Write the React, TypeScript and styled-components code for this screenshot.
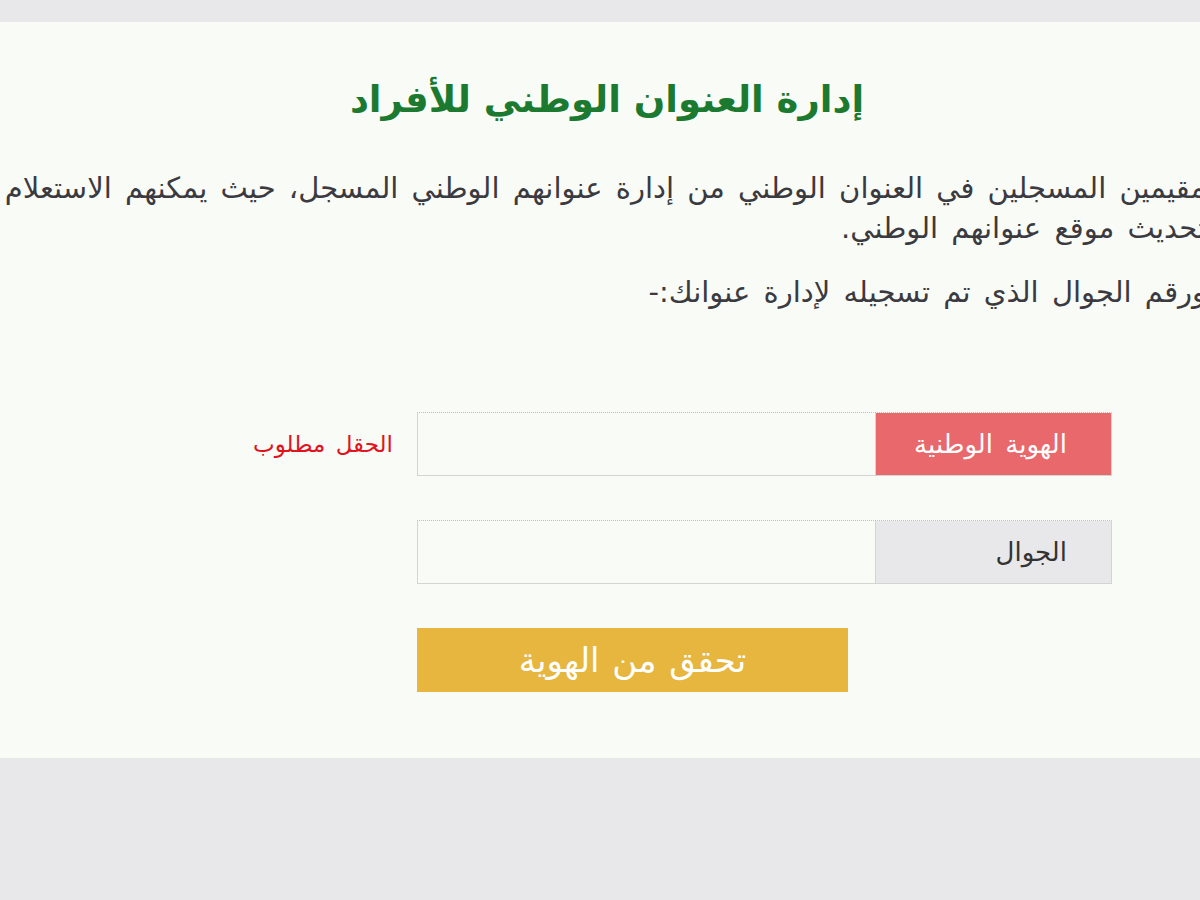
import React from "react";
import styled, { createGlobalStyle } from "styled-components";

const GlobalStyle = createGlobalStyle`
  html, body {
    margin: 0;
    padding: 0;
    background: #e8e8ea;
    overflow: hidden;
  }
  body {
    font-family: "DejaVu Sans", "Noto Sans", sans-serif;
  }
`;

const Page = styled.div`
  width: 1200px;
  height: 900px;
  padding-top: 22px;
  box-sizing: border-box;
  overflow: hidden;
`;

const Panel = styled.section`
  background: #f9fbf7;
  height: 736px;
  box-sizing: border-box;
  padding-top: 54px;
  overflow: hidden;
`;

const Title = styled.h1`
  margin: 0;
  padding-left: 14px;
  text-align: center;
  direction: rtl;
  font-family: "DejaVu Sans", sans-serif;
  font-size: 37px;
  font-weight: bold;
  line-height: 48px;
  color: #1b7a30;
`;

const Text = styled.p<{ $gap?: number }>`
  margin: ${(p) => p.$gap ?? 0}px -6px 0 0;
  direction: rtl;
  text-align: right;
  color: #3a3a40;
  font-size: 29px;
  word-spacing: 4px;
  line-height: 40px;
`;

const Line = styled.span`
  display: block;
  white-space: nowrap;
`;

const Form = styled.form`
  margin-top: 100px;
  padding-right: 88px;
  direction: rtl;
  display: flex;
  flex-direction: column;
  gap: 44px;
`;

const Row = styled.div`
  display: flex;
  align-items: center;
`;

const Group = styled.div`
  width: 695px;
  height: 64px;
  display: flex;
  box-sizing: border-box;
  border: 1px solid #d2d5d2;
  border-top-style: dotted;
  border-top-color: #c9b8c9;
`;

const Addon = styled.label<{ $error?: boolean }>`
  width: 236px;
  flex: none;
  display: flex;
  align-items: center;
  padding-right: 44px;
  box-sizing: border-box;
  background: ${(p) => (p.$error ? "#e9686b" : "#e8e8ea")};
  color: ${(p) => (p.$error ? "#ffffff" : "#333333")};
  font-size: 26px;
  word-spacing: 4px;
  border-left: 1px solid #d2d5d2;
`;

const Input = styled.input`
  flex: 1;
  border: none;
  background: #f9fbf7;
  outline: none;
  font-size: 18px;
  font-family: inherit;
`;

const Error = styled.span`
  margin-right: 24px;
  color: #e0141e;
  font-size: 23px;
  word-spacing: 3px;
  white-space: nowrap;
`;

const ButtonRow = styled.div`
  width: 695px;
  display: flex;
  justify-content: flex-end;
`;

const Button = styled.button`
  width: 431px;
  height: 64px;
  border: none;
  background: #e6b63e;
  color: #ffffff;
  font-family: inherit;
  font-size: 34px;
  word-spacing: 2px;
  cursor: pointer;
`;

export default function App() {
  return (
    <>
      <GlobalStyle />
      <Page>
        <Panel>
          <Title>إدارة العنوان الوطني للأفراد</Title>
          <Text $gap={44}>
            <Line>
              مقيمين المسجلين في العنوان الوطني من إدارة عنوانهم الوطني المسجل، حيث يمكنهم الاستعلام عن العنوان الوطني و
            </Line>
            <Line>تحديث موقع عنوانهم الوطني.</Line>
          </Text>
          <Text $gap={24}>
            <Line>ورقم الجوال الذي تم تسجيله لإدارة عنوانك:-</Line>
          </Text>
          <Form onSubmit={(e) => e.preventDefault()}>
            <Row>
              <Group>
                <Addon $error>الهوية الوطنية</Addon>
                <Input type="text" />
              </Group>
              <Error>الحقل مطلوب</Error>
            </Row>
            <Row>
              <Group>
                <Addon>الجوال</Addon>
                <Input type="tel" />
              </Group>
            </Row>
            <ButtonRow>
              <Button type="submit">تحقق من الهوية</Button>
            </ButtonRow>
          </Form>
        </Panel>
      </Page>
    </>
  );
}
